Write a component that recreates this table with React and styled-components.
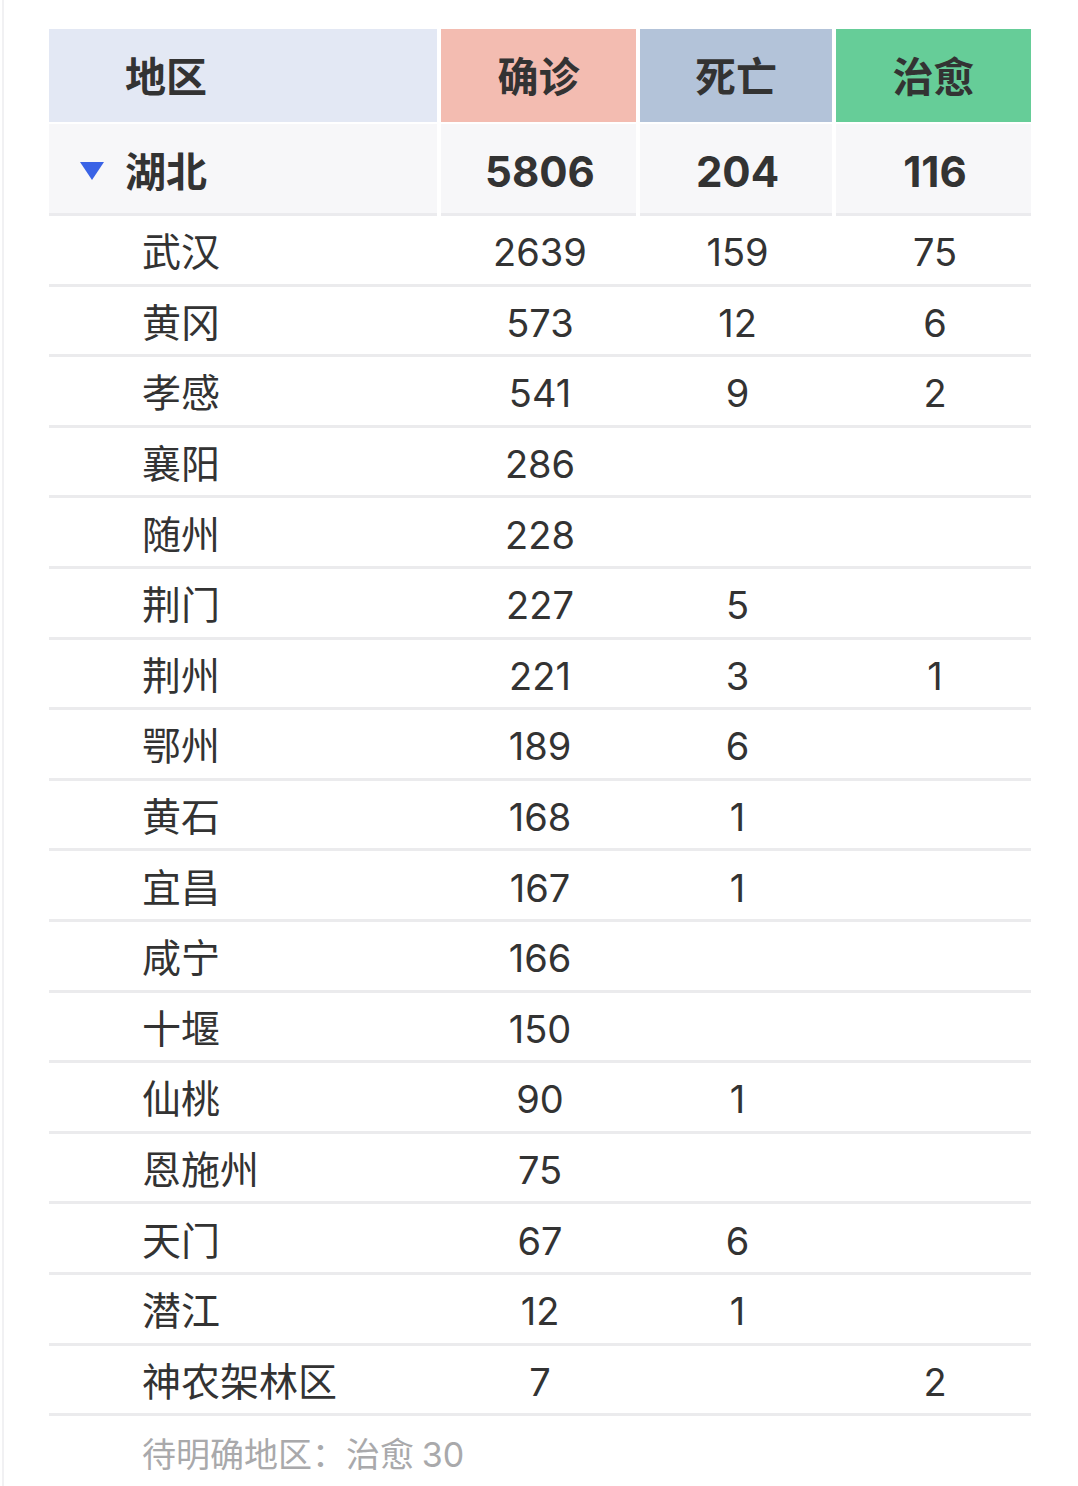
import React from "react";
import styled, { createGlobalStyle } from "styled-components";

const Global = createGlobalStyle`
  html, body { margin: 0; padding: 0; background: #fff; }
  body { font-family: "Inter", "Noto Sans CJK SC", sans-serif; color: #333; }
`;

const Page = styled.div`
  width: 1074px;
  min-height: 1486px;
  box-sizing: border-box;
  padding: 29px 45px 0 45px;
  border-left: 2px solid #f1f1f3;
  margin-left: 2px;
`;

const COLS = "388px 195px 192px 195px";

const HeaderRow = styled.div`
  display: grid;
  grid-template-columns: ${COLS};
  column-gap: 4px;
  height: 93px;
`;

const HeadCell = styled.div`
  background: ${(p) => p.$bg};
  display: flex;
  align-items: center;
  justify-content: ${(p) => (p.$left ? "flex-start" : "center")};
  padding-left: ${(p) => (p.$left ? "76px" : "0")};
  padding-bottom: 3px;
  font-family: "Noto Sans CJK SC", sans-serif;
  font-weight: 700;
  font-size: 41px;
  color: #333;
`;

const ProvinceRow = styled.div`
  display: grid;
  grid-template-columns: ${COLS};
  column-gap: 4px;
  margin-top: 2px;
  height: 92px;
`;

const ProvCell = styled.div`
  background: #f7f7f9;
  border-bottom: 3px solid #ebebee;
  display: flex;
  align-items: center;
  justify-content: ${(p) => (p.$left ? "flex-start" : "center")};
  padding-left: ${(p) => (p.$left ? "31px" : "3px")};
  padding-top: ${(p) => (p.$left ? "0" : "6px")};
  font-weight: 700;
  font-size: 42px;
  color: #333;
  box-sizing: border-box;
`;

const Triangle = styled.svg`
  width: 24px;
  height: 20px;
  margin-right: 21px;
  margin-top: 4px;
  flex-shrink: 0;
`;

const ProvName = styled.span`
  font-family: "Noto Sans CJK SC", sans-serif;
  font-weight: 700;
  font-size: 41px;
`;

const Row = styled.div`
  display: grid;
  grid-template-columns: ${COLS};
  column-gap: 4px;
  height: 70.6px;
  box-sizing: border-box;
  border-bottom: 3px solid #ebebed;
  align-items: center;
`;

const NameCell = styled.div`
  padding-left: 93px;
  font-family: "Noto Sans CJK SC", sans-serif;
  font-size: 39px;
  color: #333;
  line-height: 1;
`;

const NumCell = styled.div`
  text-align: center;
  padding-top: 5px;
  padding-left: 3px;
  font-family: "Inter", sans-serif;
  font-size: 38px;
  color: #333;
  line-height: 1;
`;

const Footer = styled.div`
  padding: 18px 0 0 93px;
  font-family: "Noto Sans CJK SC", sans-serif;
  font-size: 34px;
  color: #a9a9ab;
  line-height: 1.1;
`;

const FooterNum = styled.span`
  font-family: "Inter", sans-serif;
`;

const data = [
  ["武汉", 2639, 159, 75],
  ["黄冈", 573, 12, 6],
  ["孝感", 541, 9, 2],
  ["襄阳", 286, "", ""],
  ["随州", 228, "", ""],
  ["荆门", 227, 5, ""],
  ["荆州", 221, 3, 1],
  ["鄂州", 189, 6, ""],
  ["黄石", 168, 1, ""],
  ["宜昌", 167, 1, ""],
  ["咸宁", 166, "", ""],
  ["十堰", 150, "", ""],
  ["仙桃", 90, 1, ""],
  ["恩施州", 75, "", ""],
  ["天门", 67, 6, ""],
  ["潜江", 12, 1, ""],
  ["神农架林区", 7, "", 2],
];

export default function App() {
  return (
    <>
      <Global />
      <Page>
        <HeaderRow>
          <HeadCell $left $bg="#e3e8f4">地区</HeadCell>
          <HeadCell $bg="#f3bcb1">确诊</HeadCell>
          <HeadCell $bg="#b3c3d9">死亡</HeadCell>
          <HeadCell $bg="#66cd98">治愈</HeadCell>
        </HeaderRow>
        <ProvinceRow>
          <ProvCell $left>
            <Triangle viewBox="0 0 24 20">
              <polygon points="0,1 24,1 12,19" fill="#3a63e6" />
            </Triangle>
            <ProvName>湖北</ProvName>
          </ProvCell>
          <ProvCell>5806</ProvCell>
          <ProvCell>204</ProvCell>
          <ProvCell>116</ProvCell>
        </ProvinceRow>
        {data.map(([name, a, b, c]) => (
          <Row key={name}>
            <NameCell>{name}</NameCell>
            <NumCell>{a}</NumCell>
            <NumCell>{b}</NumCell>
            <NumCell>{c}</NumCell>
          </Row>
        ))}
        <Footer>
          待明确地区：治愈 <FooterNum>30</FooterNum>
        </Footer>
      </Page>
    </>
  );
}
